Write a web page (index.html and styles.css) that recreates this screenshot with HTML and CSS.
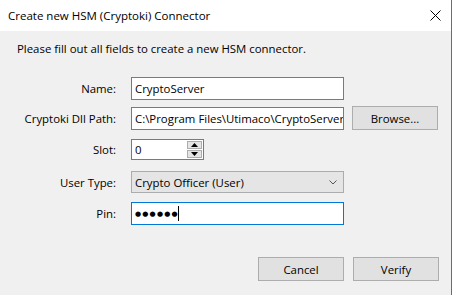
FILE: index.html
```html
<!DOCTYPE html>
<html>
<head>
<meta charset="utf-8">
<link rel="stylesheet" href="styles.css">
</head>
<body>
<div class="window">
  <div class="titlebar">
    <span class="title">Create new HSM (Cryptoki) Connector</span>
    <svg class="close" width="11" height="11" viewBox="0 0 11 11"><path d="M0.5 0.5 L10.5 10.5 M10.5 0.5 L0.5 10.5" stroke="#000" stroke-width="1" fill="none"/></svg>
  </div>
  <div class="content">
    <p class="message">Please fill out all fields to create a new HSM connector.</p>
    <div class="row row-name">
      <label class="label">Name:</label>
      <div class="textbox">CryptoServer</div>
    </div>
    <div class="row row-path">
      <label class="label">Cryptoki Dll Path:</label>
      <div class="textbox clip">C:\Program Files\Utimaco\CryptoServer</div>
      <div class="button browse">Browse...</div>
    </div>
    <div class="row row-slot">
      <label class="label">Slot:</label>
      <div class="spin">
        <span class="spin-value">0</span>
        <div class="spin-buttons">
          <div class="spin-btn"><svg width="7" height="4" viewBox="0 0 7 4"><path d="M3.5 0 L7 4 L0 4 Z" fill="#000"/></svg></div>
          <div class="spin-btn"><svg width="7" height="4" viewBox="0 0 7 4"><path d="M0 0 L7 0 L3.5 4 Z" fill="#000"/></svg></div>
        </div>
      </div>
    </div>
    <div class="row row-type">
      <label class="label">User Type:</label>
      <div class="combo">
        <span>Crypto Officer (User)</span>
        <svg class="chev" width="8" height="5" viewBox="0 0 8 5"><path d="M0.5 0.5 L4 4 L7.5 0.5" stroke="#555" stroke-width="1" fill="none"/></svg>
      </div>
    </div>
    <div class="row row-pin">
      <label class="label">Pin:</label>
      <div class="textbox focus"><span class="dots">●●●●●●</span><span class="caret"></span></div>
    </div>
    <div class="actions">
      <div class="button">Cancel</div>
      <div class="button">Verify</div>
    </div>
  </div>
</div>
</body>
</html>
```
FILE: styles.css
```css
* { box-sizing: border-box; }
html, body { margin: 0; padding: 0; }
body {
  width: 452px;
  height: 295px;
  overflow: hidden;
  font-family: "Open Sans", "Noto Sans", sans-serif;
  font-size: 11.4px;
  color: #000;
  background: #f0f0f0;
}
.window {
  width: 452px;
  height: 295px;
  background: #f0f0f0;
  border-right: 1px solid #1883d7;
  display: flex;
  flex-direction: column;
}
.titlebar {
  height: 31px;
  background: #fff;
  display: flex;
  align-items: center;
  justify-content: space-between;
  padding-left: 8px;
  padding-right: 10px;
  flex-shrink: 0;
}
.title { font-size: 11.5px; }
.close { display: block; }
.content {
  padding: 10px 0 0 0;
  display: flex;
  flex-direction: column;
}
.message {
  margin: 0 0 0 17px;
  height: 16px;
  line-height: 16px;
}
.row {
  display: flex;
  align-items: center;
}
.label {
  width: 116px;
  text-align: right;
  margin-right: 15px;
}
.textbox {
  width: 213px;
  height: 23px;
  background: #fff;
  border: 1px solid #7a7a7a;
  padding: 0 0 0 3px;
  display: flex;
  align-items: center;
  white-space: nowrap;
  overflow: hidden;
}
.textbox.focus { border-color: #0078d7; }
.row-name { margin-top: 20px; height: 23px; }
.row-path { margin-top: 6px; height: 24px; }
.row-slot { margin-top: 9px; height: 21px; }
.row-type { margin-top: 11px; height: 22px; }
.row-pin { margin-top: 9px; height: 23px; }
.button {
  height: 24px;
  width: 86px;
  background: #e1e1e1;
  border: 1px solid #adadad;
  display: flex;
  align-items: center;
  justify-content: center;
}
.browse { margin-left: 8px; }
.spin {
  width: 73px;
  height: 21px;
  background: #fff;
  border: 1px solid #7a7a7a;
  display: flex;
  align-items: center;
  justify-content: space-between;
  padding: 0 1px 0 3px;
}
.spin-buttons {
  display: flex;
  flex-direction: column;
  gap: 1px;
}
.spin-btn {
  width: 15px;
  height: 8px;
  background: #e5e5e5;
  border: 1px solid #adadad;
  display: flex;
  align-items: center;
  justify-content: center;
}
.spin-btn svg { display: block; }
.combo {
  width: 213px;
  height: 22px;
  background: #e5e5e5;
  border: 1px solid #acacac;
  display: flex;
  align-items: center;
  justify-content: space-between;
  padding: 0 6px 0 3px;
}
.chev { display: block; }
.dots {
  font-family: "DejaVu Sans", sans-serif;
  font-size: 7px;
  letter-spacing: 1.2px;
}
.caret {
  display: inline-block;
  width: 1px;
  height: 15px;
  background: #000;
  margin-left: -1px;
}
.actions {
  display: flex;
  gap: 9px;
  margin-top: 32px;
  margin-left: 258px;
}
```
